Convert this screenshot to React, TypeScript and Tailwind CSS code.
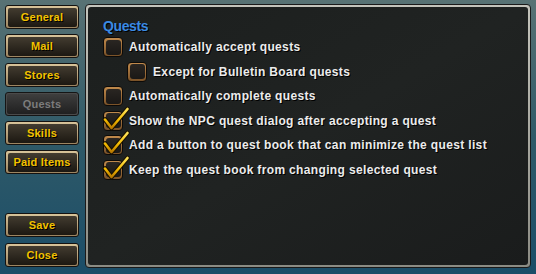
import React from "react";

const font = { fontFamily: '"Liberation Sans", Arial, sans-serif' };

function NavButton({ label, disabled }: { label: string; disabled?: boolean }) {
  if (disabled) {
    return (
      <div className="h-[24px] w-[74px] rounded-[3px] border border-[#151515] bg-[#4a4a4a] p-[1px]">
        <div className="flex h-full w-full items-center justify-center rounded-[2px] bg-gradient-to-b from-[#3e3e3e] to-[#202020] text-[11px] font-bold tracking-[0.2px] text-[#7c7c7c]">
          {label}
        </div>
      </div>
    );
  }
  return (
    <div className="h-[24px] w-[74px] rounded-[3px] border border-[#141210] bg-gradient-to-b from-[#d8c49a] to-[#9c8460] p-[1.5px]">
      <div className="flex h-full w-full items-center justify-center rounded-[2px] bg-gradient-to-b from-[#433c30] to-[#1c1812] text-[11px] font-bold tracking-[0.2px] text-[#f2c200] [text-shadow:1px_1px_0_#000]">
        {label}
      </div>
    </div>
  );
}

function Check({ checked, label }: { checked?: boolean; label: string }) {
  return (
    <div className="flex h-[20px] items-center">
      <div className="relative h-[20px] w-[20px] shrink-0">
        <div className="h-full w-full rounded-[4px] border border-[#0c0a08] bg-gradient-to-b from-[#c08a4c] to-[#7a5228] p-[1.5px]">
          <div className="h-full w-full rounded-[3px] bg-gradient-to-b from-[#2a2622] to-[#1a1816]" />
        </div>
        {checked && (
          <svg
            className="absolute left-[-1px] top-[-5px] overflow-visible"
            width="28"
            height="28"
            viewBox="0 0 28 28"
          >
            <defs>
              <linearGradient id="cg" x1="0" y1="0" x2="0" y2="1">
                <stop offset="0" stopColor="#ffe45a" />
                <stop offset="0.6" stopColor="#f2b800" />
                <stop offset="1" stopColor="#b87800" />
              </linearGradient>
            </defs>
            <path
              d="M3 13.5 L9.5 22 L25.5 3"
              fill="none"
              stroke="#1a1200"
              strokeWidth="4.6"
              strokeLinecap="round"
              strokeLinejoin="round"
            />
            <path
              d="M3 13.5 L9.5 22 L25.5 3"
              fill="none"
              stroke="url(#cg)"
              strokeWidth="2.6"
              strokeLinecap="round"
              strokeLinejoin="round"
            />
          </svg>
        )}
      </div>
      <span className="ml-[6px] whitespace-nowrap text-[12px] font-bold tracking-[0.35px] text-[#ececec] [text-shadow:1px_1px_0_#000]">
        {label}
      </span>
    </div>
  );
}

export default function App() {
  return (
    <div
      style={font}
      className="flex h-[274px] w-[536px] gap-[6px] bg-gradient-to-b from-[#587274] via-[#2f5a68] to-[#1b4d68] pl-[5px] pt-[4px]"
    >
      <div className="flex flex-col pt-[1px]">
        <div className="flex flex-col gap-[5px]">
          <NavButton label="General" />
          <NavButton label="Mail" />
          <NavButton label="Stores" />
          <NavButton label="Quests" disabled />
          <NavButton label="Skills" />
          <NavButton label="Paid Items" />
        </div>
        <div className="mt-[39px] flex flex-col gap-[6px]">
          <NavButton label="Save" />
          <NavButton label="Close" />
        </div>
      </div>
      <div className="h-[264px] w-[446px] rounded-[4px] border border-[#1a1a1a] bg-gradient-to-b from-[#c4c4bc] to-[#8c8c84] p-[2px]">
        <div className="h-full w-full rounded-[3px] bg-gradient-to-br from-[#1c1f1e] via-[#202322] to-[#1a1c1c] pl-[15px] pt-[10px]">
          <div className="text-[14px] font-bold leading-[18px] tracking-[-0.4px] text-[#3a8ae4] [text-shadow:1px_1px_0_#000]">
            Quests
          </div>
          <div className="mt-[2px] flex flex-col gap-[4.5px]">
            <Check label="Automatically accept quests" />
            <div className="pl-[24px]">
              <Check label="Except for Bulletin Board quests" />
            </div>
            <Check label="Automatically complete quests" />
            <Check checked label="Show the NPC quest dialog after accepting a quest" />
            <Check checked label="Add a button to quest book that can minimize the quest list" />
            <Check checked label="Keep the quest book from changing selected quest" />
          </div>
        </div>
      </div>
    </div>
  );
}
